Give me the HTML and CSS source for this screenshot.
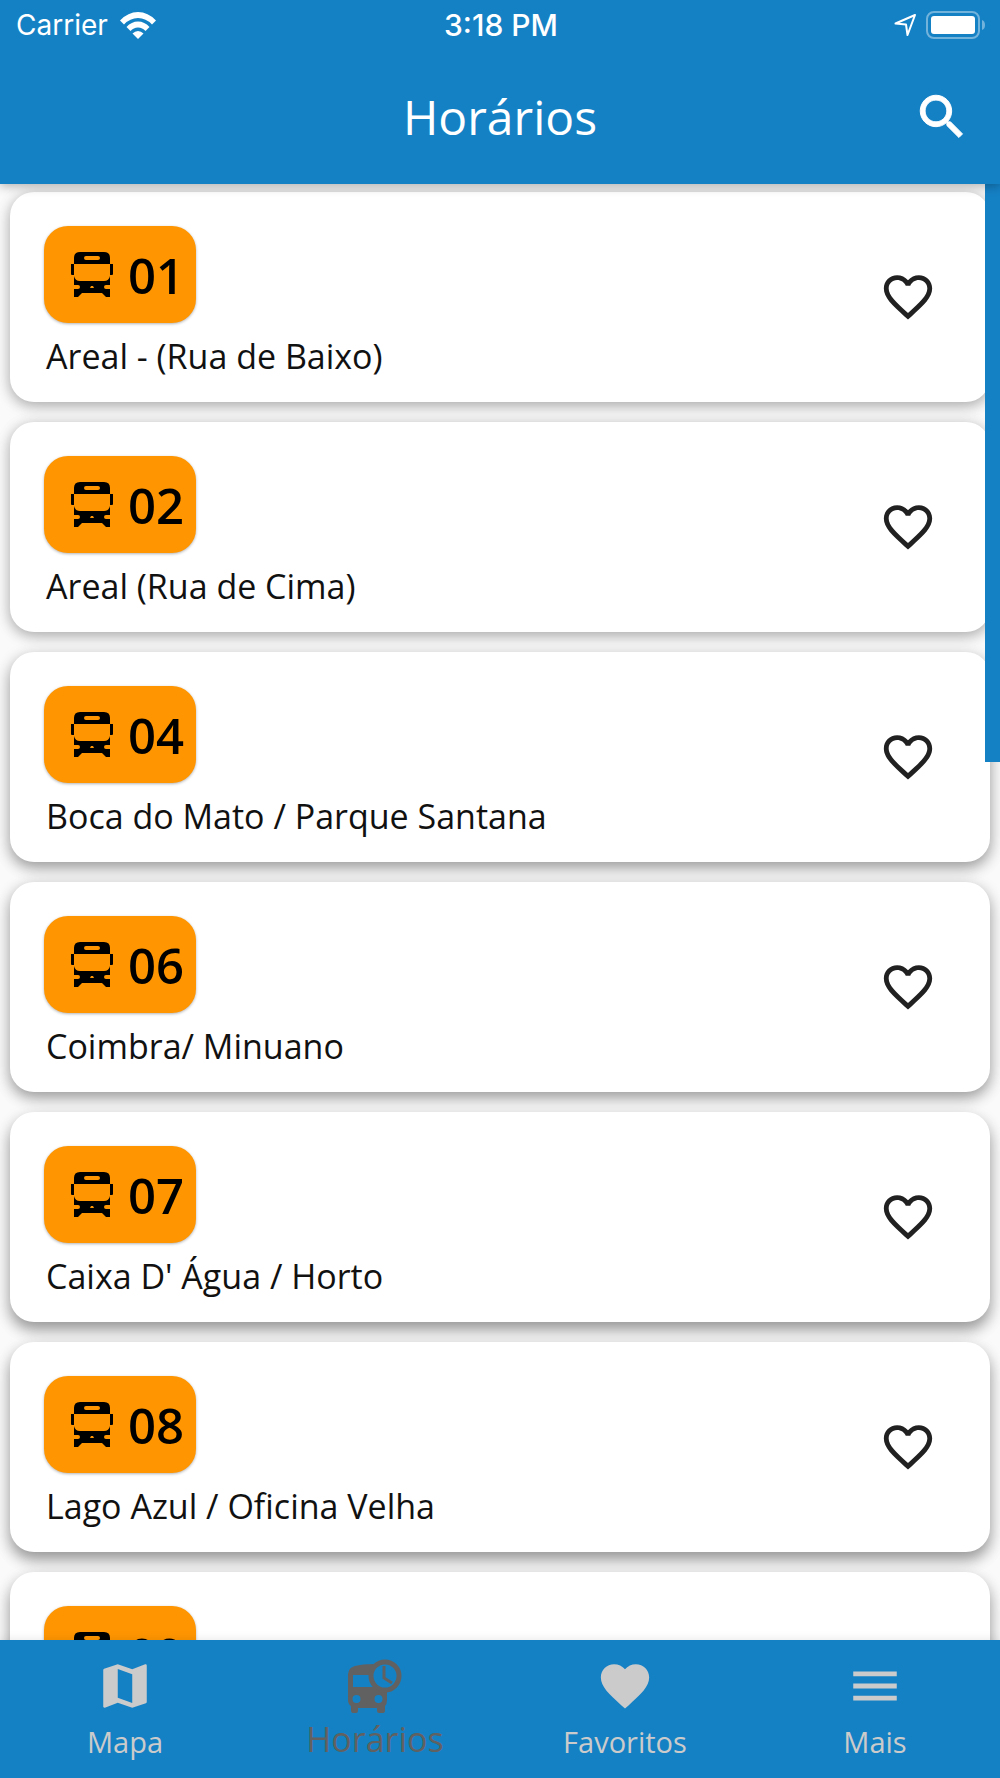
FILE: index.html
```html
<!DOCTYPE html>
<html lang="pt-BR">
<head>
<meta charset="utf-8">
<meta name="viewport" content="width=device-width, initial-scale=1">
<title>Horários</title>
<link rel="stylesheet" href="styles.css">
</head>
<body>
<svg class="sprite" aria-hidden="true">
  <symbol id="bus" viewBox="0 0 42 45">
    <path fill-rule="evenodd" d="M3 12V6q0-6 6-6h24q6 0 6 6v6zM15 4q-2 0-2 2t2 2h12q2 0 2-2t-2-2z"/>
    <path d="M0 12h3v11H1q-1 0-1-1zM39 12h3v10q0 1-1 1h-2z"/>
    <path fill-rule="evenodd" d="M3 24q1 5 6 5h24q5 0 6-5v9h-4q-2 0-2 2t2 2h4v8h-4l-4-4H11l-4 4H3v-8h4q2 0 2-2t-2-2H3zM19 36h4l-1-2h-2z"/>
  </symbol>
  <symbol id="heart-outline" viewBox="0 0 24 24">
    <path d="M16.5 3c-1.74 0-3.41.81-4.5 2.09C10.91 3.81 9.24 3 7.5 3 4.42 3 2 5.42 2 8.5c0 3.78 3.4 6.86 8.55 11.54L12 21.35l1.45-1.32C18.6 15.36 22 12.28 22 8.5 22 5.42 19.58 3 16.5 3zm-4.4 15.55l-.1.1-.1-.1C7.14 14.24 4 11.39 4 8.5 4 6.5 5.5 5 7.5 5c1.54 0 3.04.99 3.57 2.36h1.87C13.46 5.99 14.96 5 16.5 5c2 0 3.5 1.5 3.5 3.5 0 2.89-3.14 5.74-7.9 10.05z"/>
  </symbol>
</svg>

<header class="header">
  <div class="status">
    <div class="status-left">
      <span>Carrier</span>
      <svg class="wifi" viewBox="0 0 36 27" aria-hidden="true">
        <path d="M0 8.500Q8 0 18 0t18 8.500l-4 4Q26 6 18 6T4 12.500z"/>
        <path d="M6.500 15Q11.500 9.500 18 9.500T29.500 15l-4 4Q22.500 15.500 18 15.500T10.500 19z"/>
        <path d="M12.500 21.500Q15 19 18 19t5.500 2.500L18 27z"/>
      </svg>
    </div>
    <span class="clock">3:18 PM</span>
    <div class="status-right">
      <svg class="arrow" viewBox="0 0 24 24" aria-hidden="true"><path d="M21 2L1.500 10.500l10.500 1L13.500 22z"/></svg>
      <svg class="battery" viewBox="0 0 60 28" aria-hidden="true">
        <rect class="battery-case" x="1" y="1" width="52" height="26" rx="7"/>
        <rect x="5" y="5" width="44" height="18" rx="3"/>
        <path class="battery-tip" d="M56 9q3 1 3 5t-3 5z"/>
      </svg>
    </div>
  </div>
  <div class="appbar">
    <h1 class="title">Horários</h1>
    <button class="icon-button search" type="button" aria-label="Buscar">
      <svg class="icon" viewBox="0 0 24 24" aria-hidden="true"><path stroke="currentColor" stroke-width=".4" d="M15.500 14h-.79l-.28-.27C15.410 12.590 16 11.110 16 9.500 16 5.910 13.090 3 9.500 3S3 5.910 3 9.500 5.910 16 9.500 16c1.610 0 3.090-.59 4.230-1.570l.27.28v.79l5 4.990L20.490 19l-4.990-5zm-6 0C7.010 14 5 11.990 5 9.500S7.010 5 9.500 5 14 7.010 14 9.500 11.990 14 9.500 14z"/></svg>
    </button>
  </div>
</header>

<main class="content">
  <ul class="routes">
    <li class="card">
      <div class="route">
        <span class="badge"><svg class="bus" aria-hidden="true"><use href="#bus"/></svg>01</span>
        <span class="name">Areal - (Rua de Baixo)</span>
      </div>
      <button class="icon-button" type="button" aria-label="Favoritar 01"><svg class="icon"><use href="#heart-outline"/></svg></button>
    </li>
    <li class="card">
      <div class="route">
        <span class="badge"><svg class="bus" aria-hidden="true"><use href="#bus"/></svg>02</span>
        <span class="name">Areal (Rua de Cima)</span>
      </div>
      <button class="icon-button" type="button" aria-label="Favoritar 02"><svg class="icon"><use href="#heart-outline"/></svg></button>
    </li>
    <li class="card">
      <div class="route">
        <span class="badge"><svg class="bus" aria-hidden="true"><use href="#bus"/></svg>04</span>
        <span class="name">Boca do Mato / Parque Santana</span>
      </div>
      <button class="icon-button" type="button" aria-label="Favoritar 04"><svg class="icon"><use href="#heart-outline"/></svg></button>
    </li>
    <li class="card">
      <div class="route">
        <span class="badge"><svg class="bus" aria-hidden="true"><use href="#bus"/></svg>06</span>
        <span class="name">Coimbra/ Minuano</span>
      </div>
      <button class="icon-button" type="button" aria-label="Favoritar 06"><svg class="icon"><use href="#heart-outline"/></svg></button>
    </li>
    <li class="card">
      <div class="route">
        <span class="badge"><svg class="bus" aria-hidden="true"><use href="#bus"/></svg>07</span>
        <span class="name">Caixa D' Água / Horto</span>
      </div>
      <button class="icon-button" type="button" aria-label="Favoritar 07"><svg class="icon"><use href="#heart-outline"/></svg></button>
    </li>
    <li class="card">
      <div class="route">
        <span class="badge"><svg class="bus" aria-hidden="true"><use href="#bus"/></svg>08</span>
        <span class="name">Lago Azul / Oficina Velha</span>
      </div>
      <button class="icon-button" type="button" aria-label="Favoritar 08"><svg class="icon"><use href="#heart-outline"/></svg></button>
    </li>
    <li class="card">
      <div class="route">
        <span class="badge"><svg class="bus" aria-hidden="true"><use href="#bus"/></svg>09</span>
      </div>
    </li>
  </ul>
  <div class="scroll-thumb"></div>
</main>

<nav class="tabs">
  <a class="tab" href="#mapa">
    <svg class="icon" viewBox="0 0 24 24" aria-hidden="true"><path d="M20.500 3l-.16.03L15 5.100 9 3 3.360 4.900c-.21.07-.36.25-.36.48V20.500c0 .28.22.5.5.5l.16-.03L9 18.900l6 2.100 5.640-1.900c.21-.07.36-.25.36-.48V3.500c0-.28-.22-.5-.5-.5zM15 19l-6-2.110V5l6 2.110V19z"/></svg>
    <span>Mapa</span>
  </a>
  <a class="tab active" href="#horarios" aria-current="page">
    <svg class="icon" viewBox="0 0 58 58" aria-hidden="true">
      <path fill-rule="evenodd" d="M2 17q0-8 12-9 6-1 18-1l9 26v10q0 4-2 6v5q0 2-2 2h-4q-2 0-2-2v-3H12v3q0 2-2 2H7q-2 0-2-2v-5q-3-2-3-6zM7 18v12h20V18zM10.500 38a4 4 0 1 0 0 8 4 4 0 0 0 0-8zM32.500 38a4 4 0 1 0 0 8 4 4 0 0 0 0-8z"/>
      <circle class="dial" cx="39" cy="19" r="14"/>
      <path class="hands" d="M38 9v12l8 5"/>
    </svg>
    <span>Horários</span>
  </a>
  <a class="tab" href="#favoritos">
    <svg class="icon" viewBox="0 0 24 24" aria-hidden="true"><path d="M12 21.350l-1.450-1.320C5.400 15.360 2 12.280 2 8.500 2 5.420 4.420 3 7.500 3c1.740 0 3.410.81 4.500 2.090C13.090 3.810 14.760 3 16.500 3 19.580 3 22 5.420 22 8.500c0 3.780-3.400 6.860-8.550 11.540L12 21.350z"/></svg>
    <span>Favoritos</span>
  </a>
  <a class="tab" href="#mais">
    <svg class="icon" viewBox="0 0 24 24" aria-hidden="true"><path d="M3 18h18v-2H3v2zm0-5h18v-2H3v2zm0-7v2h18V6H3z"/></svg>
    <span>Mais</span>
  </a>
</nav>
</body>
</html>
```
FILE: styles.css
```css
:root {
  --blue: #1581c5;
  --orange: #ff9500;
  --muted: #cbcbcb;
  --selected: #616161;
}

* { box-sizing: border-box; }

body {
  margin: 0;
  height: 100vh;
  display: flex;
  flex-direction: column;
  overflow: hidden;
  background: #fafafa;
  color: #111;
  font-family: "Open Sans", "Noto Sans", sans-serif;
}

svg { display: block; fill: currentColor; }
.sprite { display: none; }
.icon { width: 58px; height: 58px; }

.icon-button {
  padding: 0;
  border: 0;
  background: none;
  color: #212121;
  cursor: pointer;
}

/* Header */
.header {
  position: relative;
  z-index: 2;
  flex: none;
  background: var(--blue);
  color: #fff;
  box-shadow: 0 2px 10px rgba(0, 0, 0, .3);
}

.status {
  display: grid;
  grid-template-columns: 1fr auto 1fr;
  align-items: center;
  height: 50px;
  padding: 0 14px 0 16px;
  font: 28px/50px Inter, sans-serif;
}

.status-left { display: flex; align-items: center; gap: 12px; }
.status-right { display: flex; align-items: center; justify-content: flex-end; gap: 8px; }
.clock { font-size: 30px; font-weight: 500; }
.wifi { width: 36px; height: 27px; }
.arrow { width: 24px; height: 24px; fill: none; stroke: currentColor; stroke-width: 2; stroke-linejoin: round; }
.battery { width: 60px; height: 28px; }
.battery-case { fill: none; stroke: currentColor; stroke-width: 2; opacity: .4; }
.battery-tip { opacity: .4; }

.appbar {
  display: grid;
  grid-template-columns: 1fr auto 1fr;
  align-items: center;
  height: 134px;
  padding: 0 29px;
}

.title { grid-column: 2; margin: 0; font-size: 48px; font-weight: 400; line-height: 66px; }
.search { justify-self: end; color: #fff; }

/* Route list */
.content { position: relative; flex: 1; min-height: 0; overflow: hidden; }

.routes {
  display: flex;
  flex-direction: column;
  gap: 20px;
  margin: 0;
  padding: 8px 10px;
  list-style: none;
}

.card {
  display: flex;
  align-items: center;
  justify-content: space-between;
  height: 210px;
  padding: 0 53px 0 34px;
  border-radius: 24px;
  background: #fff;
  box-shadow: 0 4px 14px rgba(0, 0, 0, .26), 0 2px 16px rgba(0, 0, 0, .1);
}

.card:nth-child(n+3) { box-shadow: 0 6px 14px rgba(0, 0, 0, .3), 0 4px 18px rgba(0, 0, 0, .12); }
.card:nth-child(n+5) { box-shadow: 0 8px 14px rgba(0, 0, 0, .3), 0 6px 18px rgba(0, 0, 0, .14); }

.route {
  display: flex;
  flex-direction: column;
  align-items: flex-start;
  align-self: flex-start;
  gap: 10px;
  padding-top: 34px;
}

.badge {
  display: flex;
  align-items: center;
  gap: 15px;
  width: 152px;
  height: 97px;
  padding-left: 27px;
  border-radius: 24px;
  background: var(--orange);
  box-shadow: 0 1px 3px rgba(0, 0, 0, .3);
  color: #000;
  font-size: 49px;
  font-weight: 600;
  line-height: 66px;
}

.bus { width: 42px; height: 45px; }
.name { padding-left: 2px; font-size: 34px; line-height: 46px; }

.scroll-thumb {
  position: absolute;
  top: 0;
  right: 0;
  width: 15px;
  height: 578px;
  background: var(--blue);
}

/* Bottom tabs */
.tabs {
  position: relative;
  z-index: 2;
  flex: none;
  display: grid;
  grid-template-columns: repeat(4, 1fr);
  height: 138px;
  background: var(--blue);
  box-shadow: 0 0 10px rgba(0, 0, 0, .1);
}

.tab {
  display: flex;
  flex-direction: column;
  align-items: center;
  gap: 7px;
  padding-top: 17px;
  color: var(--muted);
  font-size: 29px;
  line-height: 40px;
  text-decoration: none;
}

.active { gap: 4px; color: var(--selected); font-size: 34px; }
.dial { fill: var(--blue); stroke: currentColor; stroke-width: 5; }
.hands { fill: none; stroke: currentColor; stroke-width: 3; }
```
